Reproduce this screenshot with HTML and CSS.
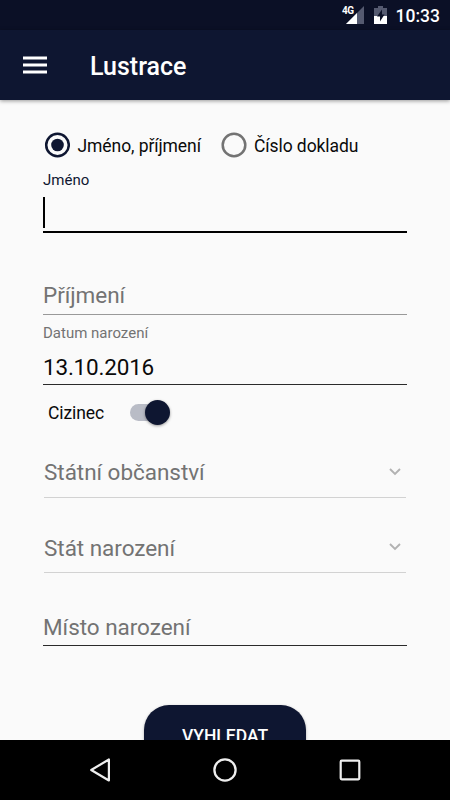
FILE: index.html
```html
<!DOCTYPE html>
<html lang="cs">
<head>
<meta charset="utf-8">
<title>Lustrace</title>
<link rel="stylesheet" href="styles.css">
</head>
<body>
<div class="status">
  <svg class="signal" width="24" height="20" viewBox="0 0 24 20"><path d="M22 1v18H4z" fill="#555a70"/><path d="M15 8v11H4z" fill="#fff"/></svg>
  <span class="network">4G</span>
  <svg class="battery" width="13" height="18" viewBox="0 0 13 18"><path d="M4 0h5v2H13v8H0V2h4z" fill="#555a70"/><path d="M0 10h13v8H0z" fill="#fff"/><path d="M8 3.500L3 10.500h3v5l4.500-7H8z" fill="#0b1026"/></svg>
  <span class="clock">10:33</span>
</div>
<header class="toolbar">
  <svg class="menu" width="24" height="18" viewBox="0 0 24 18"><path d="M0 2h24M0 9h24M0 16h24" stroke="#fff" stroke-width="2.800"/></svg>
  <h1 class="title">Lustrace</h1>
</header>
<main class="form">
  <div class="radios">
    <div class="radio"><svg width="26" height="26" viewBox="0 0 26 26"><circle cx="13.500" cy="13" r="11.300" fill="none" stroke="#0e1631" stroke-width="2.500"/><circle cx="13.500" cy="13" r="6.300" fill="#0e1631"/></svg><span>Jméno, příjmení</span></div>
    <div class="radio"><svg width="26" height="26" viewBox="0 0 26 26"><circle cx="13" cy="13" r="11.300" fill="none" stroke="#737373" stroke-width="2.500"/></svg><span>Číslo dokladu</span></div>
  </div>
  <div class="field first"><span class="label active">Jméno</span><div class="caret"></div></div>
  <div class="field surname"><span class="hint">Příjmení</span></div>
  <div class="field date"><span class="label">Datum narození</span><span class="value">13.10.2016</span></div>
  <div class="switch-row"><span>Cizinec</span><div class="switch"><div class="thumb"></div></div></div>
  <div class="select citizenship"><span class="hint">Státní občanství</span><svg width="12" height="8" viewBox="0 0 12 8"><path d="M1 1l5 5 5-5" fill="none" stroke="#b2b2b2" stroke-width="1.900"/></svg></div>
  <div class="select country"><span class="hint">Stát narození</span><svg width="12" height="8" viewBox="0 0 12 8"><path d="M1 1l5 5 5-5" fill="none" stroke="#b2b2b2" stroke-width="1.900"/></svg></div>
  <div class="field place"><span class="hint">Místo narození</span></div>
  <div class="submit">VYHLEDAT</div>
</main>
<nav class="navbar">
  <svg width="26" height="26" viewBox="0 0 26 26"><path d="M21.900 2.500v21L4.200 13z" fill="none" stroke="#eee" stroke-width="2.200" stroke-linejoin="round"/></svg>
  <svg width="26" height="26" viewBox="0 0 26 26"><circle cx="13" cy="13" r="10.600" fill="none" stroke="#eee" stroke-width="2.300"/></svg>
  <svg width="26" height="26" viewBox="0 0 26 26"><rect x="3.700" y="3.700" width="18.600" height="18.600" rx="1" fill="none" stroke="#eee" stroke-width="2.200"/></svg>
</nav>
</body>
</html>
```
FILE: styles.css
```css
* { box-sizing: border-box; }
body {
  margin: 0;
  width: 450px;
  height: 800px;
  display: flex;
  flex-direction: column;
  overflow: hidden;
  background: #fafafa;
  color: #0a0a0a;
  font-family: Roboto, sans-serif;
}
svg { display: block; flex: none; }
.status {
  position: relative;
  flex: none;
  height: 30px;
  display: flex;
  align-items: center;
  justify-content: flex-end;
  padding-right: 10px;
  background: #0b1026;
  color: #fff;
}
.network {
  position: absolute;
  left: 342px;
  top: 5px;
  font-size: 10px;
  line-height: 12px;
  font-weight: 700;
  letter-spacing: -0.5px;
}
.signal { margin: 0 8px 0 0; }
.battery { margin-right: 9px; }
.clock { font-size: 17.5px; font-weight: 500; line-height: 30px; margin-top: 2px; }
.toolbar {
  flex: none;
  height: 70px;
  display: flex;
  align-items: center;
  padding: 0 0 0 23px;
  background: #0e1631;
  box-shadow: 0 1px 4px rgba(0, 0, 0, 0.4);
  z-index: 1;
}
.title {
  margin: 4px 0 0 43px;
  color: #fff;
  font-size: 25px;
  line-height: 30px;
  font-weight: 500;
}
.form {
  flex: none;
  height: 640px;
  overflow: hidden;
  display: flex;
  flex-direction: column;
  padding: 25px 43px 0;
}
.radios { flex: none; height: 40px; display: flex; align-items: center; padding-left: 1px; }
.radio { display: flex; align-items: center; gap: 8px; width: 176.5px; font-size: 17.5px; letter-spacing: -0.08px; white-space: nowrap; }
.radio span { margin: 1px 0 0 -0.5px; }
.field {
  flex: none;
  display: flex;
  flex-direction: column;
  justify-content: flex-end;
  border-bottom: 1px solid #2b2b2b;
}
.hint, .value { font-size: 22.5px; line-height: 30px; letter-spacing: -0.04px; white-space: nowrap; }
.value { letter-spacing: -0.2px; }
.hint { color: #737373; }
.label { font-size: 15px; line-height: 18px; color: #737373; }
.label.active { color: #0e1631; }
.first { height: 68px; border-bottom: 2px solid #000; justify-content: space-between; padding: 6px 0 3px; }
.caret { width: 2px; height: 31px; background: #000; }
.surname { height: 82px; border-color: #999; padding-bottom: 4px; }
.date { height: 70px; justify-content: space-between; padding: 9px 0 2px; }
.switch-row { flex: none; height: 54px; display: flex; align-items: center; padding: 0 0 0 5px; gap: 26px; font-size: 17.5px; letter-spacing: -0.1px; }
.switch-row span { margin-top: 1px; }
.switch { width: 40px; height: 25px; display: flex; align-items: center; }
.switch::before { content: ""; width: 32px; height: 17px; margin-right: -17px; border-radius: 9px; background: #b9bcc6; }
.thumb { width: 25px; height: 25px; border-radius: 50%; background: #0e1631; box-shadow: 0 1px 3px rgba(0, 0, 0, 0.4); z-index: 1; }
.select {
  flex: none;
  display: flex;
  align-items: flex-end;
  justify-content: space-between;
  margin: 0 1px;
  padding-bottom: 9px;
  border-bottom: 1px solid #d2d2d2;
}
.select svg { margin: 0 5px 12px 0; }
.citizenship { height: 59px; }
.country { height: 75px; }
.citizenship .hint { margin-bottom: 1px; }
.place { height: 73px; padding-bottom: 3px; }
.submit {
  flex: none;
  align-self: center;
  width: 162px;
  height: 60px;
  margin-top: 59px;
  border-radius: 25px;
  background: #0e1631;
  box-shadow: 0 1px 3px rgba(0, 0, 0, 0.3);
  color: #fff;
  font-size: 17.5px;
  font-weight: 500;
  line-height: 63px;
  text-align: center;
}
.navbar {
  flex: none;
  height: 60px;
  display: flex;
  align-items: center;
  justify-content: space-between;
  padding: 0 87px;
  background: #000;
  z-index: 1;
}
```
